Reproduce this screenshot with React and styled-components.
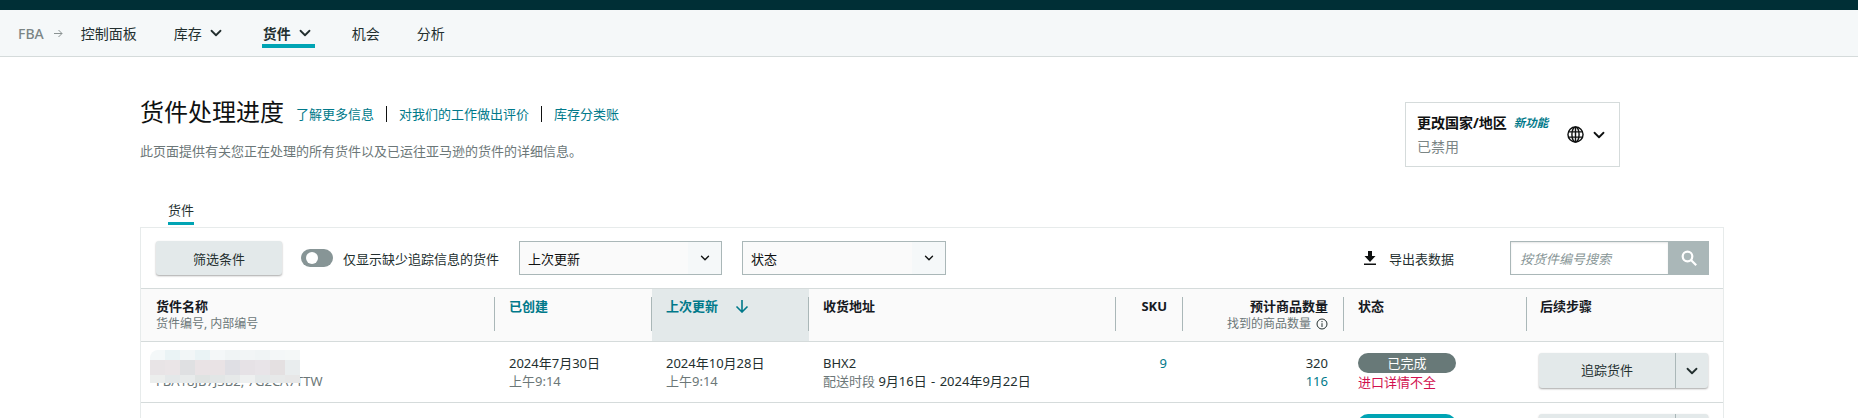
import React from 'react';
import styled, { createGlobalStyle } from 'styled-components';
import { ChevronDown } from 'lucide-react';

const FONT = `"Noto Sans", "Noto Sans CJK SC", sans-serif`;

const Global = createGlobalStyle`
  html, body { margin: 0; padding: 0; background: #fff; }
  body { font-family: ${FONT}; color: #0f1111; }
  #root { width: 1858px; height: 418px; overflow: hidden; }
  * { box-sizing: border-box; }
`;

const MOSAIC = [
  '#f4f8f9', '#eaf3f5', '#f2f6f7', '#eaf3f5', '#f4f7f8', '#f0f4f5', '#f2f5f6', '#f0f4f5', '#f4f7f8', '#f5f8f8',
  '#e8e4e6', '#eae5e7', '#dfe0e2', '#e9e3e5', '#e9e3e5', '#dfdfe4', '#e6e2e6', '#e8e4e8', '#e4e0e1', '#e9edee',
  '#eceeed', '#e4e8e9', '#e8ebeb', '#dfe3e2', '#e2e6e6', '#e6e9e9', '#eef0f0', '#e4e8e9', '#e7e9e9', '#e7e7e7',
];

const Chevron = ({ size = 18, weight = 2.4 }) => <ChevronDown size={size} strokeWidth={weight} />;

const App = () => (
  <>
    <Global />
    <TopBar />
    <Nav>
      <Crumb>FBA</Crumb>
      <CrumbArrow viewBox="0 0 9 9">
        <path d="M0 4.500h8M4.500 1 8 4.500 4.500 8" fill="none" stroke="#8a9292" strokeWidth="1" />
      </CrumbArrow>
      <NavItem>控制面板</NavItem>
      <NavItem>库存<Chevron /></NavItem>
      <NavItem $active>货件<Chevron /></NavItem>
      <NavItem>机会</NavItem>
      <NavItem>分析</NavItem>
    </Nav>

    <Page>
      <Head>
        <div>
          <TitleRow>
            <Title>货件处理进度</Title>
            <LinkGroup>
              <HeadLink>了解更多信息</HeadLink>
              <Sep />
              <HeadLink>对我们的工作做出评价</HeadLink>
              <Sep />
              <HeadLink>库存分类账</HeadLink>
            </LinkGroup>
          </TitleRow>
          <Intro>此页面提供有关您正在处理的所有货件以及已运往亚马逊的货件的详细信息。</Intro>
        </div>
        <CountryCard>
          <div>
            <CountryTitle>更改国家/地区<NewTag>新功能</NewTag></CountryTitle>
            <CountryState>已禁用</CountryState>
          </div>
          <CountryIcons>
            <svg width="17" height="17" viewBox="0 0 18 18" fill="none" stroke="#0f1111" strokeWidth="1.500">
              <circle cx="9" cy="9" r="8" />
              <ellipse cx="9" cy="9" rx="3.800" ry="8" />
              <path d="M1.500 6.200h15M1.500 11.800h15M9 1v16" />
            </svg>
            <Chevron />
          </CountryIcons>
        </CountryCard>
      </Head>

      <Tabs><Tab>货件</Tab></Tabs>

      <Panel>
        <Toolbar>
          <FilterButton>筛选条件</FilterButton>
          <Toggle />
          <ToggleLabel>仅显示缺少追踪信息的货件</ToggleLabel>
          <Select $w={203}>上次更新<SelectArrow><Chevron size={14} /></SelectArrow></Select>
          <Select $w={204}>状态<SelectArrow><Chevron size={14} /></SelectArrow></Select>
          <Export>
            <svg width="12" height="14" viewBox="0 0 12 14">
              <path d="M4 0h4v5h3.500L6 11 .5 5H4zM0 12.500h12V14H0z" fill="#0f1111" />
            </svg>
            导出表数据
          </Export>
          <Search>
            <SearchInput>按货件编号搜索</SearchInput>
            <SearchButton>
              <svg width="16" height="16" viewBox="0 0 16 16" fill="none" stroke="#fff" strokeWidth="2.200">
                <circle cx="6.500" cy="6.500" r="4.800" />
                <path d="m10 10 5.200 5.200" />
              </svg>
            </SearchButton>
          </Search>
        </Toolbar>

        <Grid>
          <HeadCell $first><Strong>货件名称</Strong><Sub>货件编号, 内部编号</Sub></HeadCell>
          <HeadCell><SortLink>已创建</SortLink></HeadCell>
          <HeadCell $sorted>
            <SortLink>上次更新
              <svg width="14" height="14" viewBox="0 0 14 14" fill="none" stroke="#00798a" strokeWidth="1.600">
                <path d="M7 1v12M1.500 7.500 7 13l5.500-5.500" />
              </svg>
            </SortLink>
          </HeadCell>
          <HeadCell><Strong>收货地址</Strong></HeadCell>
          <HeadCell $right><Strong>SKU</Strong></HeadCell>
          <HeadCell $right>
            <Strong>预计商品数量</Strong>
            <Sub>找到的商品数量
              <svg width="12" height="12" viewBox="0 0 12 12" fill="none" stroke="#232f2f" strokeWidth="1">
                <circle cx="6" cy="6" r="5" />
                <path d="M6 5.200V9M6 3v1.200" />
              </svg>
            </Sub>
          </HeadCell>
          <HeadCell><Strong>状态</Strong></HeadCell>
          <HeadCell $last><Strong>后续步骤</Strong></HeadCell>

          <Cell $first>
            <Line>&nbsp;</Line>
            <Faded>FBA18JB7J3B2, 7G2CA7TTW</Faded>
            <Mosaic>
              {MOSAIC.map((c, i) => <MosaicTile key={i} $bg={c} />)}
            </Mosaic>
          </Cell>
          <Cell><Line>2024年7月30日</Line><Faded>上午9:14</Faded></Cell>
          <Cell><Line>2024年10月28日</Line><Faded>上午9:14</Faded></Cell>
          <Cell><Line>BHX2</Line><Faded>配送时段 <DarkSpan>9月16日 - 2024年9月22日</DarkSpan></Faded></Cell>
          <Cell $right><LinkNum>9</LinkNum></Cell>
          <Cell $right><Line>320</Line><LinkNum>116</LinkNum></Cell>
          <Cell $widget>
            <Badge>已完成</Badge>
            <Warning>进口详情不全</Warning>
          </Cell>
          <Cell $widget $last>
            <SplitButton>
              <SplitMain>追踪货件</SplitMain>
              <SplitArrow><Chevron /></SplitArrow>
            </SplitButton>
          </Cell>

          <Cell $first />
          <Cell><Line>2024年7月30日</Line></Cell>
          <Cell><Line>2024年10月28日</Line></Cell>
          <Cell />
          <Cell />
          <Cell />
          <Cell $widget><Badge $teal /></Cell>
          <Cell $widget $last>
            <SplitButton><SplitMain /><SplitArrow /></SplitButton>
          </Cell>
        </Grid>
      </Panel>
    </Page>
  </>
);

const TopBar = styled.div`
  height: 10px;
  background: #002f36;
`;

const Nav = styled.nav`
  display: flex;
  align-items: center;
  gap: 37px;
  height: 47px;
  padding-left: 18px;
  background: #f5f8f9;
  border-bottom: 1px solid #d5dbdb;
  font-size: 14px;
`;

const Crumb = styled.span`
  margin-right: -27px;
  color: #7b8585;
  font-weight: 500;
`;

const CrumbArrow = styled.svg`
  width: 9px;
  height: 9px;
  margin-right: -19px;
`;

const NavItem = styled.div`
  position: relative;
  display: flex;
  align-items: center;
  gap: 5px;
  height: 20px;
  color: #232f2f;
  font-weight: ${p => (p.$active ? 700 : 400)};

  svg {
    margin-right: 1px;
  }

  &::after {
    content: '';
    display: ${p => (p.$active ? 'block' : 'none')};
    position: absolute;
    left: -1px;
    right: 0;
    bottom: -5px;
    height: 4px;
    background: #00a4b4;
  }
`;

const Page = styled.main`
  padding: 38px 0 0 140px;
`;

const Head = styled.div`
  display: flex;
  justify-content: space-between;
  align-items: flex-start;
  width: 1480px;
`;

const TitleRow = styled.div`
  display: flex;
  align-items: center;
  height: 34px;
`;

const Title = styled.h1`
  margin: 0 12px 0 0;
  font-size: 24px;
  font-weight: 400;
  line-height: 34px;
`;

const LinkGroup = styled.div`
  display: flex;
  align-items: center;
  padding-top: 4px;
`;

const HeadLink = styled.a`
  color: #00798a;
  font-size: 13px;
  line-height: 18px;
`;

const Sep = styled.span`
  width: 1px;
  height: 16px;
  margin: 0 12px;
  background: #0f1111;
`;

const Intro = styled.p`
  margin: 12px 0 0;
  color: #6c7778;
  font-size: 13px;
  line-height: 20px;
`;

const CountryCard = styled.div`
  display: flex;
  justify-content: space-between;
  align-items: center;
  width: 215px;
  height: 65px;
  margin-top: 7px;
  padding: 0 11px;
  border: 1px solid #d5dbdb;
`;

const CountryTitle = styled.div`
  display: flex;
  align-items: center;
  gap: 7px;
  font-size: 14px;
  font-weight: 700;
  line-height: 18px;
`;

const NewTag = styled.em`
  color: #00798a;
  font-size: 11.500px;
`;

const CountryState = styled.div`
  margin-top: 6px;
  color: #7b8585;
  font-size: 14px;
  line-height: 18px;
`;

const CountryIcons = styled.div`
  display: flex;
  align-items: center;
  gap: 6px;
`;

const Tabs = styled.div`
  display: flex;
  margin: 33px 0 2px 28px;
`;

const Tab = styled.div`
  height: 25px;
  color: #232f2f;
  font-size: 13px;
  line-height: 20px;
  border-bottom: 3px solid #00a4b4;
`;

const Panel = styled.section`
  width: 1584px;
  height: 191px;
  overflow: hidden;
  border: 1px solid #e7ebeb;
  border-bottom: 0;
`;

const Toolbar = styled.div`
  display: flex;
  align-items: center;
  height: 60px;
  padding: 0 14px 0 15px;
`;

const FilterButton = styled.button`
  width: 126px;
  height: 34px;
  margin-right: 19px;
  border: 0;
  border-radius: 3px;
  background: #e3e9ea;
  box-shadow: 0 1px 2px rgba(0, 0, 0, 0.35);
  color: #232f2f;
  font: 400 13px ${FONT};
`;

const Toggle = styled.span`
  position: relative;
  width: 32px;
  height: 18px;
  margin-right: 10px;
  border-radius: 9px;
  background: #879596;

  &::before {
    content: '';
    position: absolute;
    top: 3px;
    left: 5px;
    width: 12px;
    height: 12px;
    border-radius: 50%;
    background: #fff;
  }
`;

const ToggleLabel = styled.span`
  width: 156px;
  margin-right: 20px;
  color: #232f2f;
  font-size: 13px;
  white-space: nowrap;
`;

const Select = styled.div`
  position: relative;
  display: flex;
  align-items: center;
  width: ${p => p.$w}px;
  height: 34px;
  margin-right: 20px;
  padding-left: 8px;
  border: 1px solid #aab7b8;
  background: #fafafa;
  font-size: 13px;
`;

const SelectArrow = styled.span`
  position: absolute;
  top: 0;
  right: 0;
  bottom: 0;
  display: flex;
  align-items: center;
  justify-content: center;
  width: 33px;
  background: #f5f8f9;
`;

const Export = styled.div`
  display: flex;
  align-items: center;
  gap: 13px;
  margin-left: auto;
  margin-right: 56px;
  color: #232f2f;
  font-size: 13px;
`;

const Search = styled.div`
  display: flex;
  height: 34px;
`;

const SearchInput = styled.div`
  display: flex;
  align-items: center;
  width: 158px;
  padding-left: 9px;
  border: 1px solid #aab7b8;
  border-right: 0;
  box-shadow: inset 0 1px 2px rgba(0, 0, 0, 0.1);
  color: #879596;
  font-size: 13px;
  font-style: italic;
`;

const SearchButton = styled.div`
  display: flex;
  align-items: center;
  justify-content: center;
  width: 41px;
  background: #aab7b8;
`;

const Grid = styled.div`
  display: grid;
  grid-template-columns: 354px 157px 157px 307px 67px 161px 183px 1fr;
`;

const HeadCell = styled.div`
  position: relative;
  height: 54px;
  padding: 8px 16px 0 ${p => (p.$first ? 15 : p.$last ? 13 : 14)}px;
  border-top: 1px solid #d5dbdb;
  border-bottom: 1px solid #d5dbdb;
  background: ${p => (p.$sorted ? '#e3e9ea' : '#fafafa')};
  text-align: ${p => (p.$right ? 'right' : 'left')};

  &::after {
    content: '';
    display: ${p => (p.$last ? 'none' : 'block')};
    position: absolute;
    top: 8px;
    right: 0;
    width: 1px;
    height: 34px;
    background: #aab7b8;
  }
`;

const Strong = styled.div`
  color: #16191f;
  font-size: 13px;
  font-weight: 700;
  line-height: 18px;
`;

const Sub = styled.div`
  color: #6c7778;
  font-size: 12px;
  line-height: 18px;

  svg {
    margin-left: 5px;
    vertical-align: -2px;
  }
`;

const SortLink = styled.div`
  display: flex;
  align-items: center;
  gap: 17px;
  color: #00798a;
  font-size: 13px;
  font-weight: 700;
  line-height: 18px;
`;

const Cell = styled.div`
  position: relative;
  height: 61px;
  padding: ${p => (p.$widget ? 11 : 12)}px 16px 0 ${p => (p.$first ? 15 : p.$last ? 12 : 14)}px;
  border-bottom: 1px solid #d5dbdb;
  text-align: ${p => (p.$right ? 'right' : 'left')};
`;

const Line = styled.div`
  color: #232f2f;
  font-size: 13px;
  line-height: 18px;
  white-space: nowrap;
`;

const Faded = styled(Line)`
  color: #6c7778;
`;

const DarkSpan = styled.span`
  color: #232f2f;
  word-spacing: 1px;
`;

const LinkNum = styled(Line)`
  color: #00798a;
`;

const Mosaic = styled.div`
  position: absolute;
  top: 8px;
  left: 9px;
  display: grid;
  grid-template-columns: repeat(10, 15px);
  grid-template-rows: 10px 15px 8px;
  border-top-left-radius: 8px;
  overflow: hidden;
`;

const MosaicTile = styled.div`
  background: ${p => p.$bg};
`;

const Badge = styled.div`
  width: 98px;
  height: 20px;
  border-radius: 10px;
  background: ${p => (p.$teal ? '#00a4b4' : '#687978')};
  color: #fff;
  font-size: 13px;
  line-height: 20px;
  text-align: center;
`;

const Warning = styled.div`
  color: #d1104e;
  font-size: 13px;
  line-height: 18px;
`;

const SplitButton = styled.div`
  display: flex;
  width: 169px;
  height: 35px;
  border-radius: 3px;
  background: #e3e9ea;
  box-shadow: 0 1px 2px rgba(0, 0, 0, 0.35);
  color: #232f2f;
  font-size: 13px;
`;

const SplitMain = styled.div`
  flex: 1;
  border-right: 1px solid #aab7b8;
  line-height: 35px;
  text-align: center;
`;

const SplitArrow = styled.div`
  display: flex;
  align-items: center;
  justify-content: center;
  width: 32px;
`;

export default App;
